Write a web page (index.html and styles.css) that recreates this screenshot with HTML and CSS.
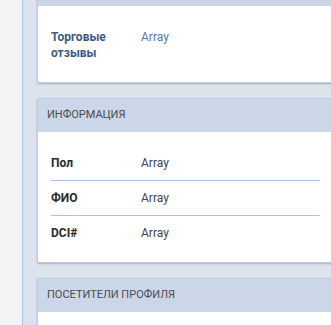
FILE: index.html
```html
<!DOCTYPE html>
<html lang="ru">
<head>
    <meta charset="UTF-8">
    <meta name="viewport" content="width=device-width, initial-scale=1.0">
    <title>Профиль</title>
    <link rel="stylesheet" href="styles.css">
</head>
<body>
    <div class="side"></div>
    <div class="main">
        <div class="card card-first">
            <div class="card-head"></div>
            <div class="card-body">
                <div class="row">
                    <div class="label label-link">Торговые отзывы</div>
                    <div class="value value-link">Array</div>
                </div>
            </div>
        </div>

        <div class="card">
            <div class="card-head">Информация</div>
            <div class="card-body">
                <div class="row">
                    <div class="label">Пол</div>
                    <div class="value">Array</div>
                </div>
                <div class="row">
                    <div class="label">ФИО</div>
                    <div class="value">Array</div>
                </div>
                <div class="row">
                    <div class="label">DCI#</div>
                    <div class="value">Array</div>
                </div>
            </div>
        </div>

        <div class="card">
            <div class="card-head">Посетители профиля</div>
            <div class="card-body"></div>
        </div>
    </div>
</body>
</html>
```

FILE: styles.css
```css
body {
    margin: 0;
    height: 100vh;
    display: flex;
    font-family: Roboto, "Liberation Sans", sans-serif;
    font-size: 12px;
    color: #333;
    overflow: hidden;
}

.side {
    width: 22px;
    flex: none;
    background: #f3f3f3;
    border-right: 1px solid #a9c4ea;
}

.main {
    flex: 1;
    background: #dce3ec;
    padding-left: 14px;
    overflow: hidden;
}

.card {
    width: 295px;
    background: #fff;
    border: 1px solid #b9cbe6;
    border-radius: 2px;
    box-shadow: 0 1px 2px rgba(60, 80, 110, 0.35);
    margin-bottom: 15px;
}
.card-first {
    margin-top: -28px;
}

.card-head {
    height: 33px;
    line-height: 32px;
    padding-left: 9px;
    background: #cbd6e8;
    color: #4d4d4d;
    font-size: 11px;
    text-transform: uppercase;
}

.card-body {
    padding: 14px 13px 12px;
    min-height: 20px;
}

.row {
    display: flex;
    padding: 9px 0;
    line-height: 16px;
    border-bottom: 1px solid #a9c4ea;
}
.row:last-child {
    border-bottom: none;
}

.label {
    width: 90px;
    flex: none;
    font-weight: bold;
    color: #2b2b2b;
}
.label-link {
    color: #3e5b84;
}

.value {
    color: #444;
}
.value-link {
    color: #5877ae;
}
```
